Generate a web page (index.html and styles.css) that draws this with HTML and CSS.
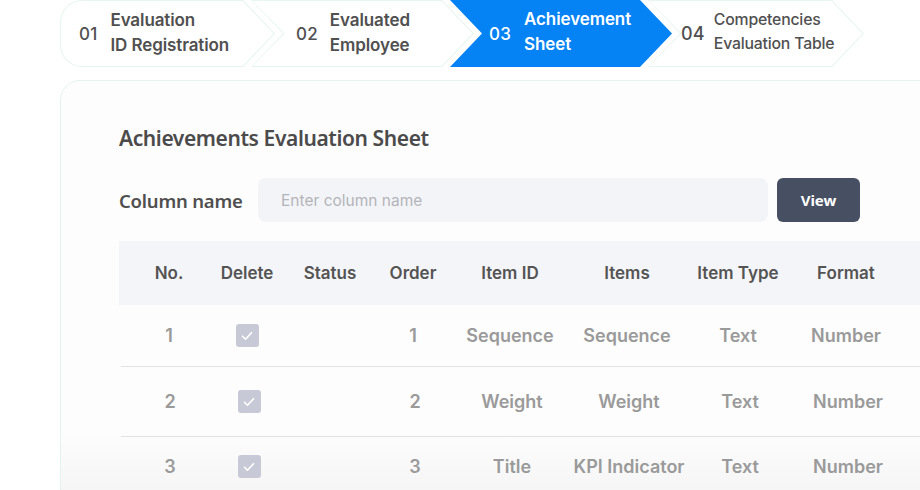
FILE: index.html
```html
<!DOCTYPE html>
<html>
<head>
<meta charset="utf-8">
<link rel="stylesheet" href="styles.css">
</head>
<body>
<div class="page">
  <div class="steps">
    <div class="step step-first s1"><span class="num">01</span><span class="lbl">Evaluation<br>ID Registration</span></div>
    <div class="step s2"><span class="num">02</span><span class="lbl">Evaluated<br>Employee</span></div>
    <div class="step step-active s3"><span class="num">03</span><span class="lbl">Achievement<br>Sheet</span></div>
    <div class="step s4"><span class="num">04</span><span class="lbl small">Competencies<br>Evaluation Table</span></div>
  </div>
  <div class="card">
    <h1 class="title">Achievements Evaluation Sheet</h1>
    <div class="filter">
      <label class="flabel">Column name</label>
      <div class="input">Enter column name</div>
      <button class="btn">View</button>
    </div>
    <div class="table">
      <div class="row head">
        <div>No.</div><div>Delete</div><div>Status</div><div>Order</div><div>Item ID</div><div>Items</div><div>Item Type</div><div>Format</div>
      </div>
      <div class="row r1">
        <div>1</div><div><span class="chk"><svg viewBox="0 0 22 22" width="22" height="22"><path d="M6.5 11.2l3 3 6-6.5" fill="none" stroke="#fff" stroke-width="1.6" stroke-linecap="round" stroke-linejoin="round"/></svg></span></div><div></div><div>1</div><div>Sequence</div><div>Sequence</div><div>Text</div><div>Number</div>
      </div>
      <div class="row r2">
        <div>2</div><div><span class="chk"><svg viewBox="0 0 22 22" width="22" height="22"><path d="M6.5 11.2l3 3 6-6.5" fill="none" stroke="#fff" stroke-width="1.6" stroke-linecap="round" stroke-linejoin="round"/></svg></span></div><div></div><div>2</div><div>Weight</div><div>Weight</div><div>Text</div><div>Number</div>
      </div>
      <div class="row r3">
        <div>3</div><div><span class="chk"><svg viewBox="0 0 22 22" width="22" height="22"><path d="M6.5 11.2l3 3 6-6.5" fill="none" stroke="#fff" stroke-width="1.6" stroke-linecap="round" stroke-linejoin="round"/></svg></span></div><div></div><div>3</div><div>Title</div><div>KPI Indicator</div><div>Text</div><div>Number</div>
      </div>
    </div>
  </div>
</div>
</body>
</html>
```
FILE: styles.css
```css
* { box-sizing: border-box; }
html, body { margin: 0; padding: 0; background: #fff; }
.page {
  width: 920px; height: 490px; overflow: hidden; position: relative;
  font-family: Inter, "Noto Sans", sans-serif;
}
.steps {
  display: flex; height: 67px; padding-left: 60px;
}
.step {
  position: relative; height: 67px; display: flex; align-items: center;
  flex: none; color: #505050;
  --d: 32px;
}
.step + .step { margin-left: -24px; }
.step::before, .step::after {
  content: ""; position: absolute; inset: 0; z-index: 0;
}
.step::before {
  background: #e7f6ee;
  clip-path: polygon(0 0, calc(100% - var(--d)) 0, 100% 50%, calc(100% - var(--d)) 100%, 0 100%, var(--d) 50%);
}
.step::after {
  background: #fff;
  clip-path: polygon(1.5px 1px, calc(100% - var(--d) - 0.5px) 1px, calc(100% - 1.5px) 50%, calc(100% - var(--d) - 0.5px) calc(100% - 1px), 1.5px calc(100% - 1px), calc(var(--d) + 1.5px) 50%);
}
.step-first::before {
  border-radius: 22px 0 0 22px;
  clip-path: polygon(0 0, calc(100% - var(--d)) 0, 100% 50%, calc(100% - var(--d)) 100%, 0 100%);
}
.step-first::after {
  inset: 1px 0 1px 1px;
  border-radius: 21px 0 0 21px;
  clip-path: polygon(0 0, calc(100% - var(--d) - 0.5px) 0, calc(100% - 1.5px) 50%, calc(100% - var(--d) - 0.5px) 100%, 0 100%);
}
.step-active { color: #fff; }
.step-active::before { background: #0582f3; }
.step-active::after { display: none; }
.num, .lbl { position: relative; z-index: 1; }
.num { font-size: 17px; font-weight: 500; margin-right: 13px; letter-spacing: 0.2px; }
.lbl { font-size: 17px; font-weight: 600; line-height: 25px; margin-top: -1px; letter-spacing: -0.1px; }
.lbl.small { font-size: 15.8px; line-height: 24px; margin-top: -3px; font-weight: 500; letter-spacing: -0.2px; }
.s1 { width: 215px; padding-left: 19px; }
.s2 { width: 223px; padding-left: 45px; }
.s2 .num { margin-right: 12px; }
.s3 { width: 222px; padding-left: 39px; }
.s3 .lbl { margin-top: -4px; }
.s3 .num { margin-right: 13px; }
.s4 { width: 216px; padding-left: 33px; }
.s4 .num { font-size: 18px; margin-right: 9px; }

.card {
  margin: 13px 0 0 60px; width: 900px; height: 430px;
  border: 1px solid #e4f3ec; border-radius: 20px;
  background: linear-gradient(to bottom, #fdfdfd 0%, #fdfdfd 82%, #f3f3f3 100%);
  padding: 43px 0 0 58px;
}
.title {
  margin: 0; font-family: "Noto Sans", sans-serif; font-weight: 600;
  font-size: 21px; line-height: 28px; color: #4b4b4b; letter-spacing: -0.4px;
}
.filter {
  display: flex; align-items: center; margin-top: 26px; height: 44px;
}
.flabel {
  font-family: "Noto Sans", sans-serif; font-weight: 600; font-size: 18.5px;
  color: #4f4f4f; width: 139px; flex: none; letter-spacing: -0.2px;
}
.input {
  width: 510px; height: 44px; background: #f3f4f8; border-radius: 8px;
  display: flex; align-items: center; padding-left: 23px;
  font-family: Inter, sans-serif; font-size: 15.5px; color: #b3b4b9; flex: none;
}
.btn {
  margin-left: 9px; width: 83px; height: 44px; border: 0; border-radius: 6px;
  background: #475063; color: #fff; font-family: "Noto Sans", sans-serif;
  font-weight: 700; font-size: 15px; flex: none; padding: 0;
}
.table { margin-top: 19px; width: 860px; }
.row {
  display: grid;
  grid-template-columns: 100px 56px 110px 56px 138px 96px 126px 90px 1fr;
  align-items: center; text-align: center; white-space: nowrap;
  font-weight: 600;
}
.row > div { display: flex; justify-content: center; }
.head { height: 64px; background: #f4f5f8; color: #545454; font-size: 17px; }
.r1, .r2, .r3 { color: #9a9a9a; font-size: 18px; }
.r1 { height: 61px; }
.r2 { height: 70px; border-top: 1px solid #e2e2e2; margin-left: 2px; }
.r3 { height: 60px; border-top: 1px solid #e2e2e2; margin-left: 2px; }
.r2 > div:first-child, .r3 > div:first-child { margin-left: -2px; }
.chk {
  width: 23px; height: 23px; border-radius: 3px; background: #c7c9d6;
  display: inline-flex; align-items: center; justify-content: center;
}
.chk svg { display: block; }
```
